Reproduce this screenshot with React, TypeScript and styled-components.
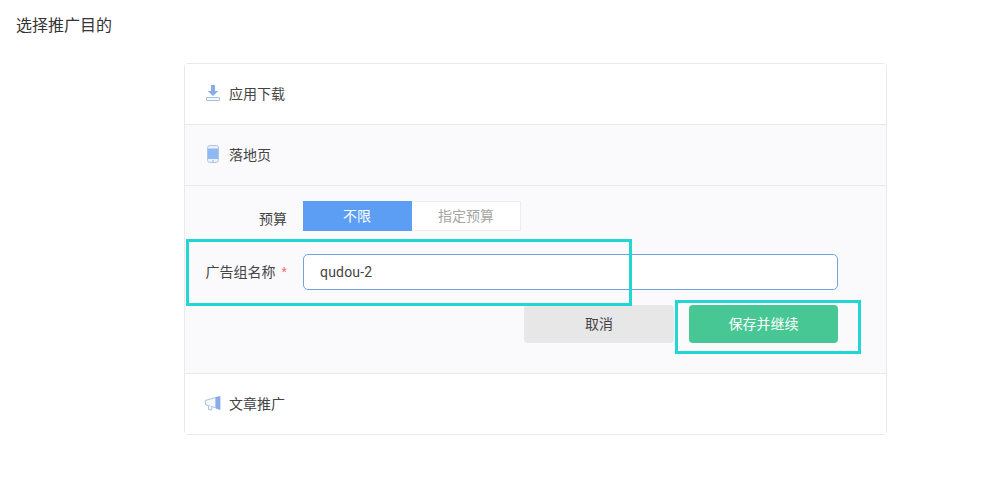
import * as React from "react";
import styled, { createGlobalStyle } from "styled-components";

const GlobalStyle = createGlobalStyle`
  html, body {
    margin: 0;
    padding: 0;
    background: #fff;
    font-family: "Liberation Sans", "Noto Sans CJK SC", sans-serif;
  }
`;

const Page = styled.div`
  position: relative;
  width: 1000px;
  height: 491px;
  overflow: hidden;
  padding: 16px 0 0 16px;
  box-sizing: border-box;
`;

const Title = styled.div`
  font-size: 16px;
  line-height: 20px;
  color: #333;
  margin-bottom: 27px;
`;

const Panel = styled.div`
  width: 703px;
  height: 372px;
  margin-left: 168px;
  box-sizing: border-box;
  border: 1px solid #e8e9ec;
  border-radius: 4px;
  display: flex;
  flex-direction: column;
`;

const Row = styled.div<{ $open?: boolean; $last?: boolean }>`
  height: ${(p) => (p.$last ? "60px" : "61px")};
  flex: none;
  box-sizing: border-box;
  display: flex;
  align-items: center;
  padding-left: 20px;
  gap: 8px;
  font-size: 14px;
  color: #444;
  background: ${(p) => (p.$open ? "#fafafc" : "#fff")};
  border-bottom: ${(p) => (p.$last ? "none" : "1px solid #e8e9ec")};
`;

const RowText = styled.span`
  padding-bottom: 2px;
`;

const IconBox = styled.span`
  width: 16px;
  height: 18px;
  display: flex;
  align-items: center;
  justify-content: center;
  margin-bottom: 2px;
`;

const Form = styled.div`
  flex: 1;
  box-sizing: border-box;
  background: #fafafc;
  border-bottom: 1px solid #e8e9ec;
  padding-top: 15px;
  display: flex;
  flex-direction: column;
`;

const FormRow = styled.div<{ $spaced?: boolean }>`
  display: flex;
  align-items: center;
  gap: 16px;
  margin-bottom: ${(p) => (p.$spaced ? "23px" : "0")};
`;

const Label = styled.div<{ $offset?: boolean }>`
  width: 102px;
  text-align: right;
  font-size: 14px;
  line-height: 20px;
  color: #444;
  white-space: nowrap;
  padding-top: ${(p) => (p.$offset ? "6px" : "0")};
`;

const Star = styled.span`
  color: #f0696b;
  margin-left: 6px;
`;

const Segments = styled.div`
  display: flex;
  width: 218px;
  height: 30px;
`;

const Segment = styled.div<{ $active?: boolean }>`
  box-sizing: border-box;
  width: 109px;
  display: flex;
  align-items: center;
  justify-content: center;
  font-size: 14px;
  padding-bottom: 3px;
  padding-right: ${(p) => (p.$active ? "1px" : "0")};
  color: ${(p) => (p.$active ? "#fff" : "#a6a6a6")};
  background: ${(p) => (p.$active ? "#5d9ef5" : "#fff")};
  border: 1px solid ${(p) => (p.$active ? "#5d9ef5" : "#eeeef0")};
  border-left-width: ${(p) => (p.$active ? "1px" : "0")};
`;

const NameInput = styled.div`
  box-sizing: border-box;
  width: 535px;
  height: 36px;
  padding-left: 16px;
  display: flex;
  align-items: center;
  background: #fff;
  border: 1px solid #6ea3dc;
  border-radius: 5px;
  font-family: Roboto, "Liberation Sans", sans-serif;
  font-size: 14px;
  letter-spacing: 0.2px;
  color: #444;
`;

const Actions = styled.div`
  display: flex;
  justify-content: flex-end;
  gap: 15px;
  width: 653px;
  margin-top: 15px;
`;

const Button = styled.div<{ $primary?: boolean }>`
  width: ${(p) => (p.$primary ? "149px" : "150px")};
  height: 38px;
  box-sizing: border-box;
  padding-bottom: 3px;
  border-radius: 4px;
  display: flex;
  align-items: center;
  justify-content: center;
  font-size: 14px;
  color: ${(p) => (p.$primary ? "#fff" : "#444")};
  background: ${(p) => (p.$primary ? "#47c793" : "#e7e7e8")};
`;

const Highlight = styled.div<{ $x: number; $y: number; $w: number; $h: number }>`
  position: absolute;
  left: ${(p) => p.$x}px;
  top: ${(p) => p.$y}px;
  width: ${(p) => p.$w}px;
  height: ${(p) => p.$h}px;
  box-sizing: border-box;
  border: 3px solid #22d7d3;
  pointer-events: none;
`;

const DownloadIcon = () => (
  <svg width="16" height="18" viewBox="0 0 16 18">
    <path d="M6 1h4v6h3.2L8 12 2.8 7H6z" fill="#86acec" />
    <rect x="1.5" y="13.5" width="13" height="3" rx="0.5" fill="#f4f7fd" stroke="#a9c0e0" />
  </svg>
);

const PhoneIcon = () => (
  <svg width="12" height="18" viewBox="0 0 12 18">
    <rect x="0.6" y="0.6" width="10.8" height="16.8" rx="2" fill="#eef3fb" stroke="#a9c0e0" />
    <rect x="1" y="3.5" width="10" height="10.5" fill="#8fb8f5" />
    <circle cx="6" cy="15.8" r="0.9" fill="#a9c0e0" />
  </svg>
);

const SpeakerIcon = () => (
  <svg width="16" height="15" viewBox="0 0 16 15">
    <path d="M0.6 4.4L10.8 1.4v10.4L0.6 8.8z" fill="#f6f8fd" stroke="#a9c0e0" />
    <path d="M3.6 9.6v4.2h3.2V10.6" fill="#f6f8fd" stroke="#a9c0e0" />
    <path d="M10.8 1L15.4 0v14l-4.6-1.6z" fill="#86acec" />
  </svg>
);

const App = () => {
  return (
    <Page>
      <GlobalStyle />
      <Title>选择推广目的</Title>
      <Panel>
        <Row>
          <IconBox><DownloadIcon /></IconBox>
          <RowText>应用下载</RowText>
        </Row>
        <Row $open>
          <IconBox><PhoneIcon /></IconBox>
          <RowText>落地页</RowText>
        </Row>
        <Form>
          <FormRow $spaced>
            <Label $offset>预算</Label>
            <Segments>
              <Segment $active>不限</Segment>
              <Segment>指定预算</Segment>
            </Segments>
          </FormRow>
          <FormRow>
            <Label>广告组名称<Star>*</Star></Label>
            <NameInput>qudou-2</NameInput>
          </FormRow>
          <Actions>
            <Button>取消</Button>
            <Button $primary>保存并继续</Button>
          </Actions>
        </Form>
        <Row $last>
          <IconBox><SpeakerIcon /></IconBox>
          <RowText>文章推广</RowText>
        </Row>
      </Panel>
      <Highlight $x={186} $y={239} $w={446} $h={67} />
      <Highlight $x={675} $y={300} $w={186} $h={54} />
    </Page>
  );
};

export default App;
